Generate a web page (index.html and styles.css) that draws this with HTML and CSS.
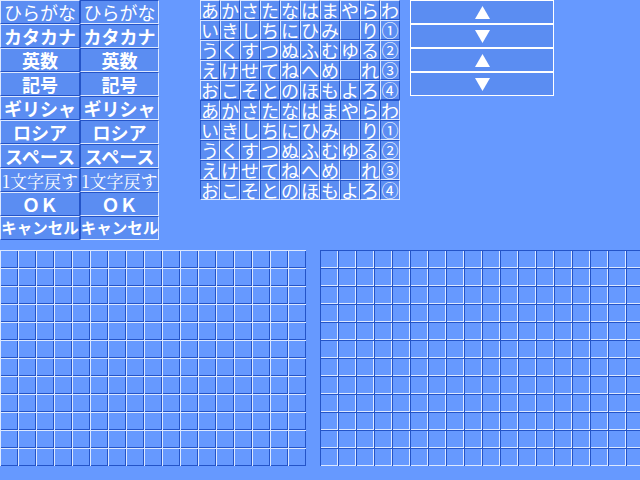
FILE: index.html
```html
<!DOCTYPE html>
<html lang="ja">
<head>
<meta charset="utf-8">
<title>ソフトキーボード</title>
<link rel="stylesheet" href="styles.css">
</head>
<body>
<div class="top">
  <div class="keys">
    <div class="key up thin">ひらがな</div><div class="key down thin">ひらがな</div>
    <div class="key up">カタカナ</div><div class="key down">カタカナ</div>
    <div class="key up">英数</div><div class="key down">英数</div>
    <div class="key up">記号</div><div class="key down">記号</div>
    <div class="key up">ギリシャ</div><div class="key down">ギリシャ</div>
    <div class="key up">ロシア</div><div class="key down">ロシア</div>
    <div class="key up">スペース</div><div class="key down">スペース</div>
    <div class="key up serif">1文字戻す</div><div class="key down serif">1文字戻す</div>
    <div class="key up">ＯＫ</div><div class="key down">ＯＫ</div>
    <div class="key up narrow">キャンセル</div><div class="key down narrow">キャンセル</div>
  </div>
  <div class="kana">
    <div class="kgrid up">
      <span>あ</span><span>か</span><span>さ</span><span>た</span><span>な</span><span>は</span><span>ま</span><span>や</span><span>ら</span><span>わ</span>
      <span>い</span><span>き</span><span>し</span><span>ち</span><span>に</span><span>ひ</span><span>み</span><span></span><span>り</span><span class="num">①</span>
      <span>う</span><span>く</span><span>す</span><span>つ</span><span>ぬ</span><span>ふ</span><span>む</span><span>ゆ</span><span>る</span><span class="num">②</span>
      <span>え</span><span>け</span><span>せ</span><span>て</span><span>ね</span><span>へ</span><span>め</span><span></span><span>れ</span><span class="num">③</span>
      <span>お</span><span>こ</span><span>そ</span><span>と</span><span>の</span><span>ほ</span><span>も</span><span>よ</span><span>ろ</span><span class="num">④</span>
    </div>
    <div class="kgrid down">
      <span>あ</span><span>か</span><span>さ</span><span>た</span><span>な</span><span>は</span><span>ま</span><span>や</span><span>ら</span><span>わ</span>
      <span>い</span><span>き</span><span>し</span><span>ち</span><span>に</span><span>ひ</span><span>み</span><span></span><span>り</span><span class="num">①</span>
      <span>う</span><span>く</span><span>す</span><span>つ</span><span>ぬ</span><span>ふ</span><span>む</span><span>ゆ</span><span>る</span><span class="num">②</span>
      <span>え</span><span>け</span><span>せ</span><span>て</span><span>ね</span><span>へ</span><span>め</span><span></span><span>れ</span><span class="num">③</span>
      <span>お</span><span>こ</span><span>そ</span><span>と</span><span>の</span><span>ほ</span><span>も</span><span>よ</span><span>ろ</span><span class="num">④</span>
    </div>
  </div>
  <div class="arrows">
    <div class="arrow up"><svg width="15" height="13" viewBox="0 0 15 13"><polygon points="7.5,0 15,13 0,13" fill="#fff"/></svg></div>
    <div class="arrow up"><svg width="15" height="13" viewBox="0 0 15 13"><polygon points="0,0 15,0 7.5,13" fill="#fff"/></svg></div>
    <div class="arrow down"><svg width="15" height="13" viewBox="0 0 15 13"><polygon points="7.5,0 15,13 0,13" fill="#fff"/></svg></div>
    <div class="arrow down"><svg width="15" height="13" viewBox="0 0 15 13"><polygon points="0,0 15,0 7.5,13" fill="#fff"/></svg></div>
  </div>
</div>
<div class="bottom">
  <div class="board raised"></div>
  <div class="board sunken"></div>
</div>
</body>
</html>
```
FILE: styles.css
```css
* {
  box-sizing: border-box;
  margin: 0;
  padding: 0;
}

html, body {
  width: 640px;
  height: 480px;
  overflow: hidden;
}

body {
  background: #6699ff;
  color: #ffffff;
  font-family: "Noto Sans CJK JP", "Noto Sans", sans-serif;
}

.top {
  display: flex;
  height: 250px;
}

.keys {
  display: grid;
  grid-template-columns: 80px 79px;
  grid-auto-rows: 24px;
  width: 200px;
  align-content: start;
}

.key {
  display: flex;
  align-items: center;
  justify-content: center;
  background: #5b8df2;
  border: 1px solid;
  font-size: 18px;
  font-weight: 700;
  line-height: 1;
  white-space: nowrap;
  overflow: hidden;
}

.key.thin {
  font-weight: 400;
}

.key.serif {
  font-family: "Noto Serif CJK JP", "Liberation Serif", "Noto Sans CJK JP", serif;
  font-weight: 400;
  font-size: 17px;
}

.key.narrow {
  font-size: 15.5px;
}

.up {
  border-color: #dce8ff #2454c8 #2454c8 #dce8ff;
}

.down {
  border-color: #2454c8 #dce8ff #dce8ff #2454c8;
}

.kana {
  width: 210px;
  display: flex;
  flex-direction: column;
}

.kgrid {
  display: grid;
  grid-template-columns: repeat(10, 20px);
  grid-auto-rows: 20px;
}

.kgrid span {
  display: flex;
  align-items: center;
  justify-content: center;
  background: #5b8df2;
  border: 1px solid;
  font-size: 18px;
  line-height: 18px;
}

.kgrid.up span {
  border-color: #dce8ff #2454c8 #2454c8 #dce8ff;
}

.kgrid.down span {
  border-color: #2454c8 #dce8ff #dce8ff #2454c8;
}

.kgrid .num {
  font-size: 17px;
}

.arrows {
  width: 144px;
  display: flex;
  flex-direction: column;
  align-self: flex-start;
}

.arrow {
  height: 24px;
  display: flex;
  align-items: center;
  justify-content: center;
  background: #5b8df2;
  border: 1px solid;
}

.bottom {
  display: flex;
  gap: 14px;
  align-items: flex-start;
}

.board {
  flex: none;
  width: 306px;
  height: 216px;
  background-size: 18px 18px;
}

.board.raised {
  background-image:
    linear-gradient(to right, #dce8ff 0 1px, transparent 1px),
    linear-gradient(to bottom, #dce8ff 0 1px, transparent 1px),
    linear-gradient(to left, #2454c8 0 1px, transparent 1px),
    linear-gradient(to top, #2454c8 0 1px, transparent 1px);
}

.board.sunken {
  width: 324px;
  background-image:
    linear-gradient(to right, #2454c8 0 1px, transparent 1px),
    linear-gradient(to bottom, #2454c8 0 1px, transparent 1px),
    linear-gradient(to left, #dce8ff 0 1px, transparent 1px),
    linear-gradient(to top, #dce8ff 0 1px, transparent 1px);
}
```
